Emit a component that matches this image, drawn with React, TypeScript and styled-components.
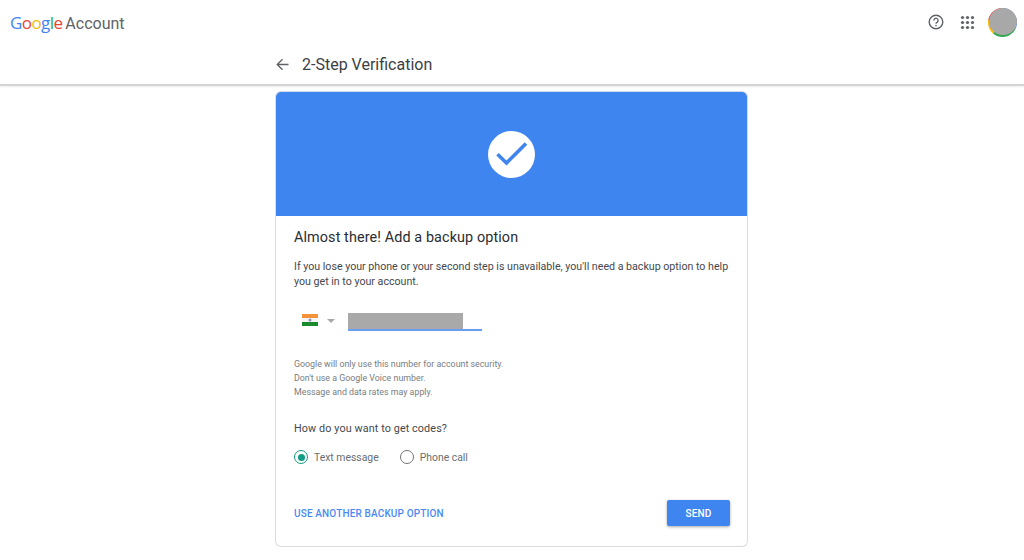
import styled, { createGlobalStyle } from 'styled-components';

const GlobalStyle = createGlobalStyle`
  html, body {
    margin: 0;
    padding: 0;
    background: #fff;
    font-family: Roboto, "Liberation Sans", sans-serif;
  }
`;

const Page = styled.div`
  width: 1024px;
  height: 560px;
  overflow: hidden;
`;

const Header = styled.header`
  height: 84px;
  border-bottom: 2px solid #d4d4d4;
  box-sizing: content-box;
  box-shadow: 0 1px 2px rgba(0, 0, 0, 0.08);
`;

const TopBar = styled.div`
  height: 45px;
  padding: 0 0 0 10px;
  display: flex;
  align-items: center;
  justify-content: space-between;
`;

const Brand = styled.div`
  display: flex;
  align-items: baseline;
  gap: 3px;
  margin-top: -1px;
`;

const GoogleWord = styled.span`
  font-family: "Open Sans", Roboto, sans-serif;
  font-size: 17px;
  letter-spacing: -0.6px;
  font-weight: 500;
`;

const Letter = styled.span<{ $color: string }>`
  color: ${(p) => p.$color};
`;

const AccountWord = styled.span`
  font-size: 16px;
  color: #5f6368;
`;

const TopIcons = styled.div`
  display: flex;
  align-items: center;
  padding-right: 7px;
  margin-top: -1px;
`;

const IconSlot = styled.span<{ $gap: number }>`
  display: flex;
  margin-right: ${(p) => p.$gap}px;
`;

const Avatar = styled.div`
  width: 29px;
  height: 29px;
  border-radius: 50%;
  background: conic-gradient(#4285f4 0 120deg, #34a853 120deg 220deg, #fbbc05 220deg 280deg, #ea4335 280deg 360deg);
  position: relative;

  &::after {
    content: '';
    position: absolute;
    top: 0;
    right: 0;
    width: 28px;
    height: 27px;
    border-radius: 50%;
    background: #a8a8a8;
  }
`;

const TitleRow = styled.div`
  width: 472px;
  margin: 0 auto;
  height: 39px;
  display: flex;
  align-items: center;
  gap: 13px;
`;

const Title = styled.h1`
  margin: 0;
  font-size: 16px;
  font-weight: 400;
  color: #3c4043;
`;

const BackIcon = styled.svg`
  width: 13px;
  height: 13px;
  flex: none;
`;

const Card = styled.main`
  width: 473px;
  height: 456px;
  box-sizing: border-box;
  margin: 5px 0 0 275px;
  border: 1px solid #dadce0;
  border-top-color: #cfdcf5;
  border-radius: 6px;
  overflow: hidden;
  display: flex;
  flex-direction: column;
`;

const Banner = styled.div`
  height: 124px;
  flex: none;
  background: #3f85ef;
  display: flex;
  align-items: center;
  justify-content: center;
`;

const Body = styled.div`
  flex: 1;
  padding: 14px 17px 0 18px;
  display: flex;
  flex-direction: column;
`;

const Heading = styled.h2`
  margin: 0;
  font-size: 14.4px;
  line-height: 16px;
  font-weight: 400;
  color: #2b2d30;
  letter-spacing: 0.1px;
`;

const Intro = styled.p`
  margin: 13px 0 0;
  font-size: 10.65px;
  line-height: 15px;
  color: #45484b;
`;

const PhoneRow = styled.div`
  margin-top: 21px;
  margin-left: 8px;
  height: 26px;
  display: flex;
  align-items: flex-start;
`;

const Flag = styled.svg`
  width: 16px;
  height: 12px;
  margin-top: 4px;
  flex: none;
`;

const Caret = styled.span`
  width: 0;
  height: 0;
  margin: 9px 0 0 9px;
  border-left: 4px solid transparent;
  border-right: 4px solid transparent;
  border-top: 4px solid #a8a8a8;
  flex: none;
`;

const PhoneField = styled.div`
  width: 134px;
  height: 16px;
  margin-left: 13px;
  margin-top: 3px;
  border-bottom: 2px solid #6a9cf0;
`;

const PhoneMask = styled.div`
  width: 115px;
  height: 16px;
  background: #a9a9a9;
`;

const Notes = styled.div`
  margin-top: 21px;
`;

const Note = styled.div`
  font-size: 8.85px;
  line-height: 14px;
  color: #7a7d81;
`;

const Question = styled.div`
  margin-top: 23px;
  font-size: 10.8px;
  line-height: 14px;
  color: #45484b;
  letter-spacing: 0.1px;
`;

const Radios = styled.div`
  margin-top: 14px;
  display: flex;
  align-items: center;
  gap: 21px;
`;

const RadioItem = styled.label`
  display: flex;
  align-items: center;
  gap: 6px;
  font-size: 10.4px;
  color: #6a6e72;
`;

const RadioDot = styled.span<{ $on?: boolean }>`
  width: 14px;
  height: 14px;
  box-sizing: border-box;
  border-radius: 50%;
  border: 1.5px solid ${(p) => (p.$on ? '#0f9d84' : '#757575')};
  display: flex;
  align-items: center;
  justify-content: center;

  &::after {
    content: '';
    display: ${(p) => (p.$on ? 'block' : 'none')};
    width: 7px;
    height: 7px;
    border-radius: 50%;
    background: #0f9d84;
  }
`;

const Actions = styled.div`
  margin-top: 36px;
  display: flex;
  align-items: center;
  justify-content: space-between;
`;

const TextLink = styled.a`
  font-size: 10px;
  font-weight: 500;
  color: #4a8af4;
  letter-spacing: 0.15px;
`;

const SendButton = styled.button`
  width: 63px;
  height: 26px;
  border: 0;
  padding: 0;
  border-radius: 2px;
  background: #3f85ef;
  color: #fff;
  font-family: inherit;
  font-size: 10px;
  font-weight: 500;
  letter-spacing: 0.2px;
  box-shadow: 0 1px 3px rgba(0, 0, 0, 0.35);
`;

const google: [string, string][] = [
  ['G', '#4285f4'],
  ['o', '#ea4335'],
  ['o', '#fbbc05'],
  ['g', '#4285f4'],
  ['l', '#34a853'],
  ['e', '#ea4335'],
];

const gridDots = [2.5, 7.5, 12.5];

export default function App() {
  return (
    <Page>
      <GlobalStyle />
      <Header>
        <TopBar>
          <Brand>
            <GoogleWord>
              {google.map(([ch, color], i) => (
                <Letter key={i} $color={color}>
                  {ch}
                </Letter>
              ))}
            </GoogleWord>
            <AccountWord>Account</AccountWord>
          </Brand>
          <TopIcons>
            <IconSlot $gap={16}>
              <svg width="16" height="16" viewBox="0 0 16 16" fill="none">
                <circle cx="8" cy="8" r="6.8" stroke="#5f6368" strokeWidth="1.4" />
                <path
                  d="M5.9 6.4a2.1 2.1 0 1 1 3.3 1.7c-.8.5-1.2.9-1.2 1.7"
                  stroke="#5f6368"
                  strokeWidth="1.3"
                />
                <circle cx="8" cy="11.6" r="0.8" fill="#5f6368" />
              </svg>
            </IconSlot>
            <IconSlot $gap={13}>
              <svg width="15" height="15" viewBox="0 0 15 15" fill="#5f6368">
                {gridDots.flatMap((y) =>
                  gridDots.map((x) => <circle key={`${x}-${y}`} cx={x} cy={y} r="1.6" />),
                )}
              </svg>
            </IconSlot>
            <Avatar />
          </TopIcons>
        </TopBar>
        <TitleRow>
          <BackIcon viewBox="0 0 13 13" fill="none">
            <path d="M12.5 6.5H1.5M6.5 1.2 1.2 6.5l5.3 5.3" stroke="#5f6368" strokeWidth="1.3" />
          </BackIcon>
          <Title>2-Step Verification</Title>
        </TitleRow>
      </Header>
      <Card>
        <Banner>
          <svg width="47" height="47" viewBox="0 0 47 47">
            <circle cx="23.5" cy="23.5" r="23.5" fill="#fff" />
            <path d="M9.5 23.3 18.5 32 38 12.5" fill="none" stroke="#3f85ef" strokeWidth="3.6" />
          </svg>
        </Banner>
        <Body>
          <Heading>Almost there! Add a backup option</Heading>
          <Intro>
            If you lose your phone or your second step is unavailable, you'll need a backup option
            to help you get in to your account.
          </Intro>
          <PhoneRow>
            <Flag viewBox="0 0 16 12">
              <rect width="16" height="4" fill="#f4933a" />
              <rect y="4" width="16" height="4" fill="#f4f4f4" />
              <rect y="8" width="16" height="4" fill="#1b8a2e" />
              <circle cx="8" cy="6" r="1.5" fill="#8a93b5" />
            </Flag>
            <Caret />
            <PhoneField>
              <PhoneMask />
            </PhoneField>
          </PhoneRow>
          <Notes>
            <Note>Google will only use this number for account security.</Note>
            <Note>Don't use a Google Voice number.</Note>
            <Note>Message and data rates may apply.</Note>
          </Notes>
          <Question>How do you want to get codes?</Question>
          <Radios>
            <RadioItem>
              <RadioDot $on />
              Text message
            </RadioItem>
            <RadioItem>
              <RadioDot />
              Phone call
            </RadioItem>
          </Radios>
          <Actions>
            <TextLink>USE ANOTHER BACKUP OPTION</TextLink>
            <SendButton>SEND</SendButton>
          </Actions>
        </Body>
      </Card>
    </Page>
  );
}
